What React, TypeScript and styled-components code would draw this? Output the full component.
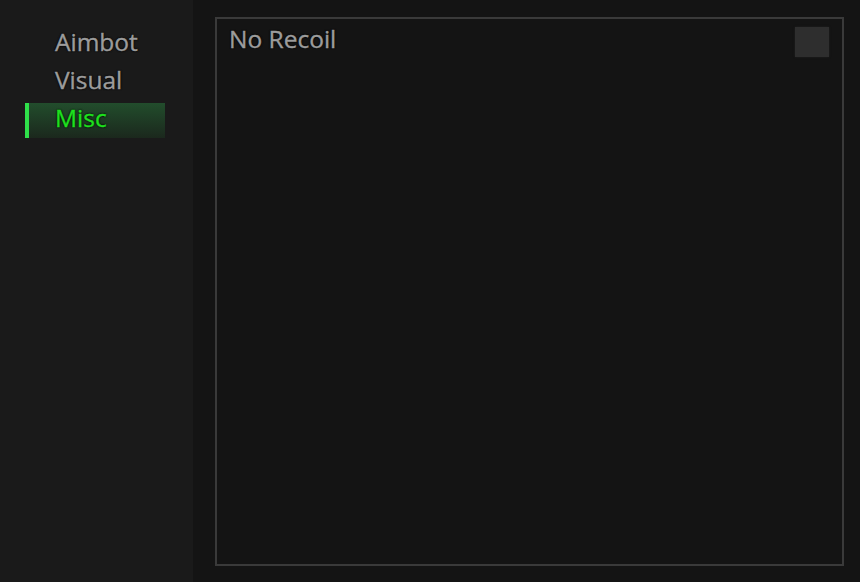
import React, { useState } from "react";
import styled, { createGlobalStyle } from "styled-components";

const Global = createGlobalStyle`
  html, body { margin: 0; padding: 0; background: #141414; }
  body { font-family: "Open Sans", "Noto Sans", sans-serif; }
`;

const Layout = styled.div`
  display: flex;
  width: 860px;
  height: 582px;
  background: #141414;
`;

const Sidebar = styled.nav`
  width: 193px;
  flex: none;
  background: #1a1a1a;
  display: flex;
  flex-direction: column;
  gap: 3px;
  padding: 27px 0 0 25px;
  box-sizing: border-box;
`;

const NavItem = styled.div<{ $active?: boolean }>`
  width: 140px;
  height: 35px;
  box-sizing: border-box;
  padding: 0 0 6px 26px;
  display: flex;
  align-items: center;
  font-size: 24.5px;
  color: ${(p) => (p.$active ? "#1fe01f" : "#9c9c9c")};
  -webkit-text-stroke: 0.4px ${(p) => (p.$active ? "#1fe01f" : "#9c9c9c")};
  text-shadow: 0 0 2px #000, 0 0 2px #000;
  border-left: 4px solid ${(p) => (p.$active ? "#2fe04a" : "transparent")};
  background: ${(p) =>
    p.$active ? "linear-gradient(to bottom, #224d2c, #1b281d)" : "transparent"};
  cursor: pointer;
`;

const Main = styled.main`
  flex: 1;
  padding: 17px 16px 16px 22px;
  display: flex;
`;

const Panel = styled.section`
  flex: 1;
  border: 2px solid #3a3a3a;
  display: flex;
  align-items: flex-start;
  justify-content: space-between;
  padding: 4px 13px 0 12px;
`;

const Label = styled.span`
  font-size: 24.5px;
  color: #9c9c9c;
  -webkit-text-stroke: 0.4px #9c9c9c;
  text-shadow: 0 0 2px #000, 0 0 2px #000;
  line-height: 32px;
`;

const Check = styled.div`
  width: 34px;
  height: 30px;
  margin-top: 4px;
  background: #2e2e2e;
  box-shadow: 0 0 2px #222;
`;

export default function App() {
  const [tab, setTab] = useState("Misc");
  return (
    <Layout>
      <Global />
      <Sidebar>
        {["Aimbot", "Visual", "Misc"].map((t) => (
          <NavItem key={t} $active={tab === t} onClick={() => setTab(t)}>
            {t}
          </NavItem>
        ))}
      </Sidebar>
      <Main>
        <Panel>
          <Label>No Recoil</Label>
          <Check />
        </Panel>
      </Main>
    </Layout>
  );
}
